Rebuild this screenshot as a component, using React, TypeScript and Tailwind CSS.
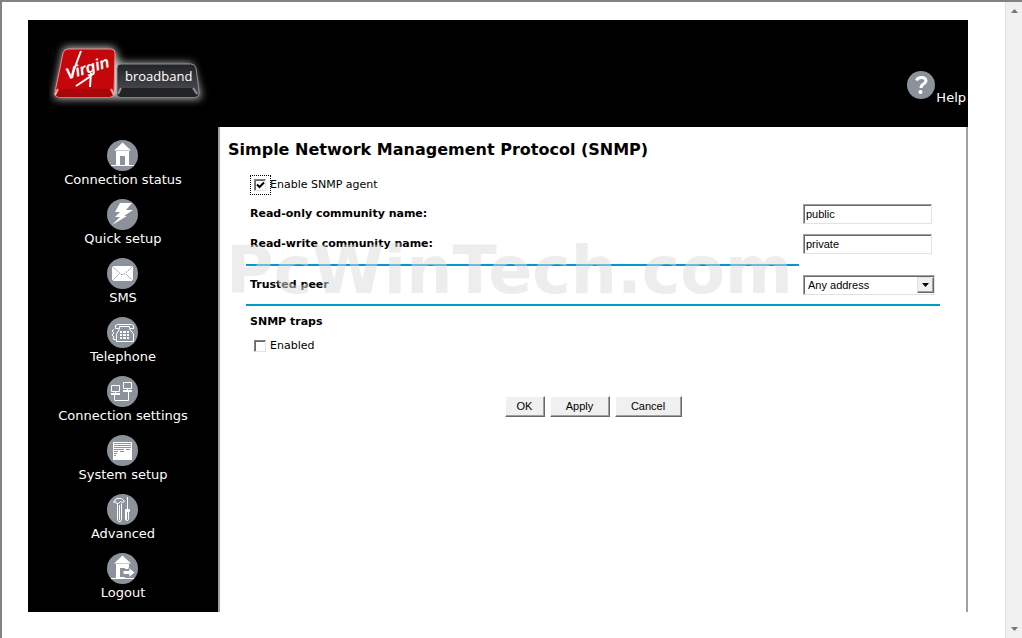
import * as React from "react"

interface NavItem {
  label: string
  icon: React.ReactNode
}

const navItems: NavItem[] = [
  {
    label: "Connection status",
    icon: (
      <g fill="#fff">
        <path d="M15.500 2.500 7 10.500h17zM9 10h13v15h-4v-9h-5v9H9z" />
        <path d="M4 25h23v1H4z" />
      </g>
    ),
  },
  {
    label: "Quick setup",
    icon: <path fill="#fff" d="M13 4h12l-6 7h7l-9 6h3L5 26l8-8H8l5-5H8z" />,
  },
  {
    label: "SMS",
    icon: (
      <g fill="none" stroke="#8b929b">
        <path fill="#fff" stroke="none" d="M5 8h21v15H5z" />
        <path d="m5 8 9 8.500h3L26 8M5 23l7-7M26 23l-7-7" strokeDasharray="2 1" />
      </g>
    ),
  },
  {
    label: "Telephone",
    icon: (
      <g fill="none" stroke="#fff">
        <path d="M8.500 11.500v-3l2-1h14l2 1v3h-4v-2h-10v2zM12.500 12l-3 5v7.500h17V17l-4-5" />
        <path d="M7 12l-2 2 2 2-2 2 2 2-1 2 3 1" />
        <path
          fill="#fff"
          stroke="none"
          d="M13 14h2v2h-2zm3 0h3v2h-3zm4 0h2v2h-2zm-7 3h2v2h-2zm3 0h3v2h-3zm4 0h2v2h-2zm-7 3h2v2h-2zm3 0h3v2h-3zm4 0h2v2h-2z"
        />
      </g>
    ),
  },
  {
    label: "Connection settings",
    icon: (
      <g fill="none" stroke="#fff">
        <path d="M4.500 9.500h8v6h-8zM16.500 6.500h8v6h-8zM7.500 18v6.500h14V16" />
        <path strokeWidth="2" d="M4 18h9M16 15h9" />
        <path d="M8.500 16v2M20.500 13v2" />
      </g>
    ),
  },
  {
    label: "System setup",
    icon: (
      <>
        <path fill="#fff" d="M6 7h19v18H6z" />
        <path
          stroke="#8b929b"
          d="M7 8.500h17M7 10.500h17M7 12.500h17M7 14.500h10M19 14.500h4M7 16.500h4M13 16.500h4M7 18.500h3M7 20.500h2"
        />
      </>
    ),
  },
  {
    label: "Advanced",
    icon: (
      <g fill="none" stroke="#fff">
        <path d="M6.500 8.500l3-4h5l3 3-2 1-2-1-2 2h-2l-1-2zM10.500 9.500v16l1 2h2l1-2v-16" />
        <path d="M12.500 11v15M20.500 3v12" />
        <path fill="#fff" d="M18.500 15.500h4v2h-1v8l-1 1h-1l-1-1v-8z" />
        <path stroke="#8b929b" d="M20.500 18v8" />
      </g>
    ),
  },
  {
    label: "Logout",
    icon: (
      <g fill="#fff">
        <path d="M15.500 2.500 7 10.500h17zM9 10h13v6h-4v-1h-5v9h5v2H9z" />
        <path d="M4 25h23v1H4z" />
        <path stroke="#8b929b" d="M16 17.500h6v-3l6 5-6 5v-3h-6z" />
      </g>
    ),
  },
]

function Logo() {
  return (
    <svg width="172" height="80" viewBox="0 0 172 80" role="img" aria-label="Virgin broadband">
      <defs>
        <filter id="glow" x="-20%" y="-30%" width="140%" height="160%">
          <feGaussianBlur stdDeviation="4" />
        </filter>
        <linearGradient id="key" x1="0" y1="0" x2="0" y2="1">
          <stop offset="0" stopColor="#222326" />
          <stop offset="1" stopColor="#505154" />
        </linearGradient>
      </defs>
      <g fill="#c9c9c9" stroke="#c9c9c9" strokeWidth="5" filter="url(#glow)">
        <path d="M17 10h46l6 16h72l8 30H8z" />
      </g>
      <path
        d="M19 9h43q4 0 4 4l-1 40q0 4-4 4H10q-5 0-4-5l8-39q1-4 5-4z"
        fill="#c5070b"
        stroke="#e88f8a"
        strokeWidth="1"
      />
      <path d="M9 49h53l2 5q-1 3-4 3H10q-4-1-3-4z" fill="#a80609" />
      <path d="M9 49 6 55M62 49l3 6" stroke="#f2aaa4" strokeWidth="2" />
      <path
        d="M72 24h70q4 0 5 4l3 23q1 6-4 6H72q-4 0-4-4V28q0-4 4-4z"
        fill="url(#key)"
        stroke="#8b8c8f"
      />
      <path d="M72 48h72l5 7q-1 2-4 2H72q-3 0-4-3z" fill="#222326" />
      <path d="m72 48-3 6M144 48l4 6" stroke="#919296" strokeWidth="2" />
      <g transform="rotate(-17 37 32)">
        <text
          x="17"
          y="34"
          fill="#fff"
          className="font-['Liberation_Sans'] text-[16px] font-bold italic"
        >
          Virgin
        </text>
      </g>
      <path d="m32 11-9 24M27 46l15-10M42 33l-1 14" stroke="#fff" strokeWidth="2" fill="none" />
      <text x="76" y="41" fill="#fff" className="font-['Open_Sans'] text-[13px]">
        broadband
      </text>
    </svg>
  )
}

interface CheckBoxProps {
  label: string
  checked?: boolean
  focused?: boolean
}

function CheckBox({ label, checked, focused }: CheckBoxProps) {
  return (
    <label className="flex h-5 items-center">
      <span
        className={
          focused
            ? "relative -mr-px flex h-5 w-[21px] items-center border border-dotted border-black pl-[3px]"
            : "relative -mr-px flex h-5 w-[21px] items-center border border-transparent pl-[3px]"
        }
      >
        <input
          type="checkbox"
          defaultChecked={checked}
          className="peer size-3 appearance-none border border-t-[#808080] border-r-[#e3e3e3] border-b-[#e3e3e3] border-l-[#808080] bg-white shadow-[inset_1px_1px_0_#696969] outline-none"
        />
        <svg
          className="pointer-events-none absolute left-[3px] hidden peer-checked:block"
          width="12"
          height="12"
          viewBox="0 0 12 12"
        >
          <path d="m3 5.500 2.500 2.500L10 3.500" fill="none" stroke="#000" strokeWidth="2" />
        </svg>
      </span>
      {label}
    </label>
  )
}

interface TextRowProps {
  id: string
  label: string
  value: string
}

function TextRow({ id, label, value }: TextRowProps) {
  return (
    <div className="grid h-[30px] grid-cols-[1fr_137px] items-center gap-1">
      <label htmlFor={id} className="pl-1 font-bold">
        {label}
      </label>
      <input
        id={id}
        type="text"
        defaultValue={value}
        className="h-5 w-[129px] border border-t-[#a0a0a0] border-r-[#e3e3e3] border-b-[#e3e3e3] border-l-[#a0a0a0] bg-white px-0.5 font-['Liberation_Sans',sans-serif] shadow-[inset_1px_1px_0_#696969] outline-none"
      />
    </div>
  )
}

function PushButton({ children, className }: { children: React.ReactNode; className: string }) {
  return (
    <button
      type="button"
      className={`${className} h-[21px] border border-t-white border-r-[#696969] border-b-[#696969] border-l-white bg-[#f0f0f0] font-['Liberation_Sans',sans-serif] shadow-[inset_-1px_-1px_0_#a0a0a0]`}
    >
      {children}
    </button>
  )
}

export default function App() {
  return (
    <div className="flex min-h-screen border-t-2 border-l-2 border-[#828282] bg-white font-['DejaVu_Sans',Verdana,sans-serif] text-[11px] text-black">
      <div className="min-w-0 flex-1 pt-[18px] pr-[37px] pl-[26px]">
        <header className="flex h-[107px] items-end justify-between bg-black pr-0.5 pl-[21px]">
          <div className="pb-[7px]">
            <Logo />
          </div>
          <a href="#help" className="flex items-end gap-px pb-5 text-[13px] leading-[18px] text-white">
            <svg width="28" height="28" viewBox="0 0 28 28" className="mb-2">
              <circle cx="14" cy="14" r="14" fill="#8b929b" />
              <path
                d="M9.500 9.500q1-3 5-3t4.500 3q0 2-2.500 3.500-2.500 1.500-2.500 4"
                fill="none"
                stroke="#fff"
                strokeWidth="3"
              />
              <circle cx="13.500" cy="21" r="2" fill="#fff" />
            </svg>
            Help
          </a>
        </header>

        <div className="flex">
          <nav className="w-[190px] shrink-0 bg-black pt-[13px]">
            {navItems.map((item) => (
              <a
                key={item.label}
                href="#"
                className="flex flex-col items-center pb-2.5 text-[13px] leading-[18px] whitespace-nowrap text-white"
              >
                <svg width="32" height="31" viewBox="0 0 32 31">
                  <circle cx="15.500" cy="15.500" r="15.500" fill="#8b929b" />
                  {item.icon}
                </svg>
                {item.label}
              </a>
            ))}
          </nav>

          <main className="relative min-w-0 flex-1 border-x-2 border-[#a0a0a0] pt-[11px]">
            <h1 className="pl-2 text-[16px] leading-6 font-bold">
              Simple Network Management Protocol (SNMP)
            </h1>
            <form className="px-[26px] pt-[13px]">
              <div className="pb-1 pl-1">
                <CheckBox label="Enable SNMP agent" checked focused />
              </div>
              <TextRow id="read-only" label="Read-only community name:" value="public" />
              <TextRow id="read-write" label="Read-write community name:" value="private" />
              <hr className="mt-[5px] mr-[141px] border-t-2 border-[#0099cc]" />

              <div className="grid grid-cols-[1fr_137px] items-center gap-1 py-[9px]">
                <label htmlFor="peer" className="pl-1 font-bold">
                  Trusted peer
                </label>
                <div className="relative h-5 w-[132px]">
                  <select
                    id="peer"
                    className="h-5 w-full appearance-none border border-t-[#a0a0a0] border-r-[#e3e3e3] border-b-[#e3e3e3] border-l-[#a0a0a0] bg-white pl-1 font-['Liberation_Sans',sans-serif] shadow-[inset_1px_1px_0_#696969] outline-none"
                  >
                    <option>Any address</option>
                  </select>
                  <span className="pointer-events-none absolute top-0.5 right-px flex h-4 w-[17px] items-center justify-center border border-t-[#e3e3e3] border-r-[#696969] border-b-[#696969] border-l-[#e3e3e3] bg-[#f0f0f0] shadow-[inset_-1px_-1px_0_#a0a0a0]">
                    <svg width="7" height="4" viewBox="0 0 7 4">
                      <path d="M0 0h7L3.500 4z" />
                    </svg>
                  </span>
                </div>
              </div>
              <hr className="border-t-2 border-[#0099cc]" />

              <h2 className="pt-1.5 pl-1 leading-5 font-bold">SNMP traps</h2>
              <div className="pt-1 pl-1">
                <CheckBox label="Enabled" />
              </div>

              <div className="flex justify-center gap-[5px] pt-10">
                <PushButton className="w-10">OK</PushButton>
                <PushButton className="w-[60px]">Apply</PushButton>
                <PushButton className="w-[67px]">Cancel</PushButton>
              </div>
            </form>

            <div className="pointer-events-none absolute top-[104px] left-1.5 text-[65px] leading-20 font-bold text-[#dbdbdb]/50">
              PcWinTech.com
            </div>
          </main>
        </div>
      </div>

      <div className="flex w-[17px] shrink-0 flex-col items-center justify-between border-l border-[#e3e3e3] bg-[#f0f0f0] py-[7px]">
        <svg width="7" height="4" viewBox="0 0 7 4">
          <path d="M0 4h7L3.500 0z" fill="#777" />
        </svg>
        <svg width="7" height="4" viewBox="0 0 7 4">
          <path d="M0 0h7L3.500 4z" fill="#777" />
        </svg>
      </div>
    </div>
  )
}
